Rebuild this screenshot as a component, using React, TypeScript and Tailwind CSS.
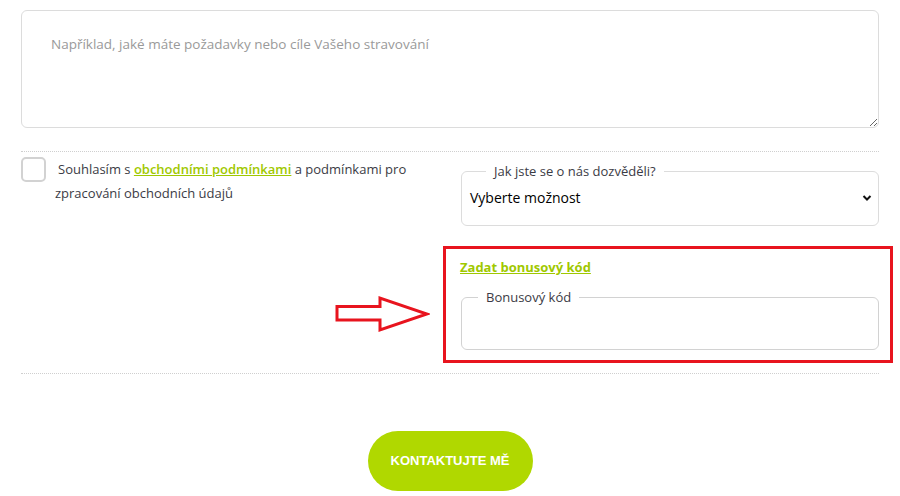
import React from 'react';

export default function App() {
  return (
    <div className="w-[900px] h-[496px] overflow-hidden bg-white px-[21px] pt-[10px] font-['Open_Sans',sans-serif] text-[#333]">
      {/* Message */}
      <textarea
        className="block w-full h-[118px] rounded-md border border-[#dcdcdc] px-[29px] pt-[23px] text-[13.5px] outline-none placeholder:text-[#9a9a9a]"
        placeholder="Například, jaké máte požadavky nebo cíle Vašeho stravování"
      />

      <div className="mt-[23px] border-t border-dotted border-[#cfcfcf]" />

      <div className="flex pt-[5px]">
        {/* Consent */}
        <div className="flex flex-1 items-start">
          <div className="w-[25px] h-[25px] shrink-0 rounded-[5px] border-2 border-[#d2d2d2]" />
          <p className="ml-[9px] w-[360px] indent-[3px] text-[13px] leading-[24px] text-[#3b3b45]">
            Souhlasím s{' '}
            <a href="#" className="font-semibold text-[#9fc800] underline">obchodními podmínkami</a>{' '}
            a podmínkami pro zpracování obchodních údajů
          </p>
        </div>

        {/* How did you hear */}
        <fieldset className="w-[418px] h-[63px] mt-[6px] rounded-md border border-[#dcdcdc] px-[8px]">
          <legend className="ml-[16px] px-[8px] text-[13px] leading-[16px] text-[#3b3b45]">Jak jste se o nás dozvěděli?</legend>
          <div className="flex items-center justify-between pt-[8px]">
            <span className="text-[14px] font-medium text-black">Vyberte možnost</span>
            <svg width="10" height="8" viewBox="0 0 10 8" className="mr-[-2px]">
              <path d="M1.5 2 L5 5.5 L8.5 2" fill="none" stroke="#111" strokeWidth="2" />
            </svg>
          </div>
        </fieldset>
      </div>

      {/* Bonus code */}
      <div className="relative ml-auto mt-[31px] w-[418px] pb-[23px]">
        <a href="#" className="block -ml-px text-[13px] leading-[20px] font-bold text-[#9fc800] underline">Zadat bonusový kód</a>
        <fieldset className="mt-[12px] h-[61px] rounded-md border border-[#d2d2d2]">
          <legend className="ml-[16px] px-[8px] text-[13px] leading-[16px] text-[#3b3b45]">Bonusový kód</legend>
        </fieldset>

        {/* annotation */}
        <div className="absolute -left-[18px] -right-[14px] -top-[11px] bottom-[10px] border-[3px] border-[#e8141e]" />
        <svg className="absolute -left-[127px] top-[38px]" width="96" height="38" viewBox="0 0 96 38">
          <path d="M3 11.5 H46 V3 L93 19 L46 35 V25 H3 Z" fill="white" stroke="#e8141e" strokeWidth="3" strokeLinejoin="miter" />
        </svg>
      </div>

      <div className="border-t border-dotted border-[#cfcfcf]" />

      <div className="flex justify-center pt-[57px]">
        <button className="h-[60px] w-[165px] rounded-full bg-[#b0d800] font-['Liberation_Sans',sans-serif] text-[13px] font-bold text-white">
          KONTAKTUJTE MĚ
        </button>
      </div>
    </div>
  );
}
